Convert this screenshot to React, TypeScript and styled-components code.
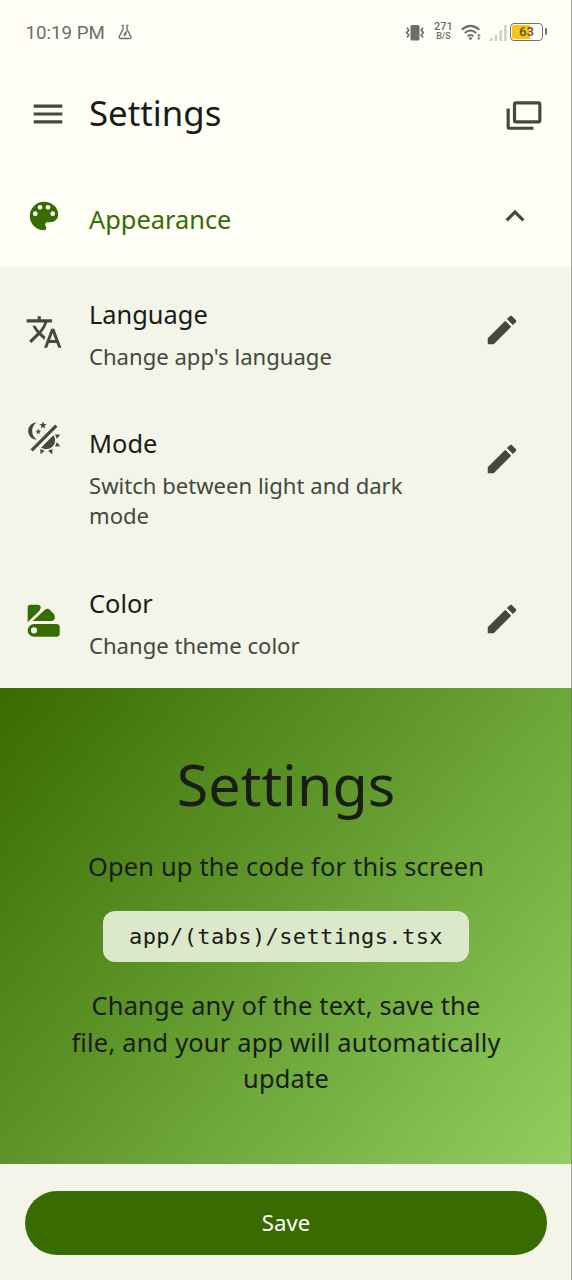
import React from "react";
import styled, { createGlobalStyle } from "styled-components";

const ink = "#1a1c16";
const muted = "#44483d";
const green = "#386b01";

const Global = createGlobalStyle`
  * { box-sizing: border-box; }
  body { margin: 0; background: #f3f5e9; font-family: "Noto Sans", sans-serif; color: ${ink}; }
  h1, h2, h3, p { margin: 0; font-weight: 400; }
`;

const Screen = styled.div`
  position: relative;
  width: 572px;
  height: 1280px;
  display: flex;
  flex-direction: column;
  overflow: hidden;
  background: #f3f5e9;
  &::after {
    content: "";
    position: absolute;
    inset: 0 0 0 auto;
    width: 1px;
    background: rgba(90, 95, 85, 0.5);
  }
`;
const StatusBar = styled.div`
  height: 64px;
  flex: none;
  display: flex;
  align-items: center;
  justify-content: space-between;
  padding: 0 29px 0 25.5px;
  background: #fefef6;
  color: #6c6d69;
  font-family: Roboto, sans-serif;
`;
const StatusGroup = styled.div<{ $gap: number }>`
  display: flex;
  align-items: center;
  gap: ${(p) => p.$gap}px;
`;
const Clock = styled.span`
  padding-top: 2px;
  font-size: 18.7px;
  line-height: 24px;
`;
const Speed = styled.div`
  display: flex;
  flex-direction: column;
  align-items: center;
  width: 20px;
  margin: -2px 0 0 1px;
  font-size: 11px;
  font-weight: 500;
  line-height: 10px;
  small { font-size: 9px; line-height: 9px; }
`;
const Battery = styled.div`
  position: relative;
  width: 33px;
  height: 18px;
  margin-left: -4px;
  border: 1.5px solid #70716c;
  border-radius: 4px;
  padding: 1px;
  background: linear-gradient(90deg, #fbc414 63%, transparent 63%) content-box;
  color: #55513f;
  font-size: 13px;
  font-weight: 500;
  line-height: 14px;
  text-align: center;
  &::after {
    content: "";
    position: absolute;
    right: -4.5px;
    top: 4px;
    width: 2px;
    height: 7px;
    border-radius: 1px;
    background: #70716c;
  }
`;
const AppBar = styled.header`
  height: 102px;
  flex: none;
  display: flex;
  align-items: center;
  padding: 0 29px 2px 28.5px;
  background: #fefef6;
  color: ${muted};
`;
const Title = styled.h1`
  flex: 1;
  margin-left: 22.5px;
  padding-bottom: 2px;
  font-size: 34.8px;
  line-height: 44px;
  color: ${ink};
`;
const SectionHead = styled.div`
  height: 101px;
  flex: none;
  display: flex;
  align-items: center;
  padding: 0 38.5px 2px 25px;
  background: #fefef6;
  color: ${green};
`;
const SectionTitle = styled.h2`
  flex: 1;
  margin-left: 26px;
  padding-top: 7px;
  font-size: 25.4px;
  line-height: 38px;
`;
const Chevron = styled.div`
  color: ${muted};
`;
const Item = styled.div<{ $height: number }>`
  height: ${(p) => p.$height}px;
  flex: none;
  display: flex;
  align-items: flex-start;
  padding: 28px 51.5px 0 25px;
`;
const Lead = styled.div<{ $top: number; $green?: boolean }>`
  width: 38px;
  height: 38px;
  display: flex;
  justify-content: center;
  margin-top: ${(p) => p.$top}px;
  color: ${(p) => (p.$green ? green : muted)};
`;
const Trail = styled.div`
  margin-top: 16px;
  color: ${muted};
`;
const ItemText = styled.div`
  flex: 1;
  margin-left: 26px;
  padding-right: 40px;
`;
const ItemTitle = styled.h3`
  font-size: 25.4px;
  line-height: 38px;
`;
const ItemNote = styled.p`
  margin-top: 8px;
  font-size: 22.1px;
  line-height: 30px;
  color: ${muted};
`;
const Hero = styled.section`
  height: 476px;
  flex: none;
  display: flex;
  flex-direction: column;
  align-items: center;
  padding-top: 60px;
  background: linear-gradient(129.8deg, #386b01, #92cf60);
  text-align: center;
`;
const HeroTitle = styled.h2`
  font-size: 57.4px;
  line-height: 72px;
`;
const HeroText = styled.p<{ $top: number }>`
  width: 434px;
  margin-top: ${(p) => p.$top}px;
  font-size: 25.4px;
  line-height: 36.5px;
  letter-spacing: 0.2px;
`;
const Code = styled.code`
  width: 366px;
  height: 51px;
  margin-top: 27px;
  border-radius: 12px;
  background: #dbe8ca;
  font-family: "DejaVu Sans Mono", monospace;
  font-size: 22px;
  letter-spacing: 0.4px;
  line-height: 51px;
`;
const Footer = styled.footer`
  flex: 1;
  padding: 27px 25px 0;
`;
const SaveButton = styled.button`
  width: 522px;
  height: 64px;
  border: 0;
  border-radius: 32px;
  background: ${green};
  color: #fff;
  font: 400 22.2px/32px "Noto Sans", sans-serif;
`;

const Glyph = ({ d }: { d: string }) => (
  <svg width="38" height="38" viewBox="0 0 24 24" fill="currentColor" display="block">
    <path d={d} />
  </svg>
);

const paths = {
  menu: "M3 6h18v2H3zM3 11h18v2H3zM3 16h18v2H3z",
  chevron: "M7.41 15.41 12 10.83l4.59 4.58L18 14l-6-6-6 6z",
  palette:
    "M17.5 12a1.5 1.5 0 0 1-1.5-1.5A1.5 1.5 0 0 1 17.5 9a1.5 1.5 0 0 1 1.5 1.5a1.5 1.5 0 0 1-1.5 1.5m-3-4A1.5 1.5 0 0 1 13 6.5A1.5 1.5 0 0 1 14.5 5A1.5 1.5 0 0 1 16 6.5A1.5 1.5 0 0 1 14.5 8m-5 0A1.5 1.5 0 0 1 8 6.5A1.5 1.5 0 0 1 9.5 5A1.5 1.5 0 0 1 11 6.5A1.5 1.5 0 0 1 9.5 8m-3 4A1.5 1.5 0 0 1 5 10.5A1.5 1.5 0 0 1 6.5 9A1.5 1.5 0 0 1 8 10.5A1.5 1.5 0 0 1 6.5 12M12 3a9 9 0 0 0-9 9a9 9 0 0 0 9 9a1.5 1.5 0 0 0 1.5-1.5c0-.39-.15-.74-.39-1c-.23-.27-.38-.62-.38-1a1.5 1.5 0 0 1 1.5-1.5H16a5 5 0 0 0 5-5c0-4.42-4.03-8-9-8",
  translate:
    "M12.87 15.07l-2.54-2.51.03-.03A17.52 17.52 0 0 0 14.07 6H17V4h-7V2H8v2H1v2h11.17C11.5 7.92 10.44 9.75 9 11.35 8.07 10.32 7.3 9.19 6.69 8h-2c.73 1.63 1.73 3.17 2.98 4.56l-5.09 5.02L4 19l5-5 3.11 3.11.76-2.04M18.5 10h-2L12 22h2l1.12-3h4.75L21 22h2l-4.5-12m-2.62 7l1.62-4.33L19.12 17h-3.24z",
  theme:
    "M7.5 2c-1.79 1.15-3 3.18-3 5.5s1.21 4.35 3.03 5.5C4.46 13 2 10.54 2 7.5A5.5 5.5 0 0 1 7.5 2m11.57 1.5l1.43 1.43L4.93 20.5L3.5 19.07L19.07 3.5m-6.18 2.43L11.41 5L9.97 6l.42-1.7L9 3.24l1.75-.12l.58-1.65L12 3.1l1.73.03l-1.35 1.13l.51 1.67m-3.3 3.61l-1.16-.73l-1.12.78l.34-1.32l-1.09-.83l1.36-.09l.45-1.29l.51 1.27l1.36.03l-1.05.87l.4 1.31M19 13.5a5.5 5.5 0 0 1-5.5 5.5c-1.22 0-2.35-.4-3.26-1.07l7.69-7.69c.67.91 1.07 2.04 1.07 3.26m-4.4 6.58l2.77-1.15l-.24 3.35l-2.53-2.2m4.33-2.7l1.15-2.77l2.2 2.54l-3.35.23m1.15-4.96l-1.14-2.78l3.34.24l-2.2 2.54M9.63 18.93l2.77 1.15l-2.53 2.19l-.24-3.34z",
  pencil:
    "M20.71 7.04c.39-.39.39-1.04 0-1.41l-2.34-2.34c-.37-.39-1.02-.39-1.41 0l-1.84 1.83 3.75 3.75M3 17.25V21h3.75L17.81 9.93l-3.75-3.75L3 17.25z",
};

const CardsIcon = () => (
  <svg width="38" height="38" viewBox="0 -1 24 24" fill="none" stroke="currentColor" strokeWidth="2">
    <rect x="6" y="4" width="16" height="12" rx="1" />
    <path d="M2 7.5V19a1 1 0 0 0 1 1h15" />
  </svg>
);

const SwatchIcon = () => (
  <svg width="33.4" height="33.4" viewBox="0 0 100 100" fill="currentColor">
    <path d="M2 55V10q0-8 8-8h22q9 0 9 8 0 6-4 10z" />
    <path d="M17 51 54 17q8-6 14 0l12 12q6 8 3 15-3 7-10 7z" />
    <path
      fillRule="evenodd"
      d="M21 60h67q10 0 10 9v20q0 9-10 9H21a19 19 0 0 1 0-38zm0 10a9 9 0 1 0 0 18 9 9 0 0 0 0-18z"
    />
  </svg>
);

const FlaskIcon = () => (
  <svg width="14" height="16" viewBox="0 0 14 16" fill="none" stroke="currentColor" strokeWidth="1.3">
    <path d="M3.5 1.4H5v4l-3.800 7.200q-.7 1.900 1.200 1.900h9.200q1.900 0 1.200-1.900L9 5.400v-4h1.500M6 10.500l2-2.500v2M8 9.500l-2 2.500" />
  </svg>
);

const VibrateIcon = () => (
  <svg width="20" height="17" viewBox="0 0 20 17" fill="none" stroke="currentColor" strokeWidth="1.6">
    <rect x="5.5" y="1" width="9" height="15.5" rx="1.5" fill="currentColor" stroke="none" />
    <path d="M2 3.800l1.800 2.400-2.200 2.400 2.200 2.400L2 13.400M18 3.800l-1.800 2.400 2.200 2.400-2.200 2.400 1.800 2.400" />
  </svg>
);

const WifiIcon = () => (
  <svg width="21" height="17" viewBox="0 0 21 17" fill="none" stroke="currentColor" strokeWidth="2">
    <path d="M.7 5.800Q9.500-2 18.300 5.800M3.800 9q5.700-5 11.400 0M6.600 12.200q2.900-2.500 5.800 0" />
    <path d="m7.300 13.900 2.200 2.400 2.200-2.400q-2.200-1.200-4.400 0zM16 12.200l1.800-2.400 1.800 2.400zM16 13.500l1.800 2.400 1.800-2.400z" fill="currentColor" stroke="none" />
  </svg>
);

const SignalIcon = () => (
  <svg width="17" height="17" viewBox="0 0 17 17" fill="#d0d0c9">
    <path d="M0 14h2.500v3H0zM4.700 11h2.500v6H4.700zM9.400 6h2.500v11H9.400zM14.100 1h2.500v16h-2.500z" />
  </svg>
);

type RowProps = {
  icon: React.ReactNode;
  iconTop: number;
  title: string;
  note: string;
  height: number;
  green?: boolean;
};

const SettingRow = ({ icon, iconTop, title, note, height, green: isGreen }: RowProps) => (
  <Item $height={height}>
    <Lead $top={iconTop} $green={isGreen}>{icon}</Lead>
    <ItemText>
      <ItemTitle>{title}</ItemTitle>
      <ItemNote>{note}</ItemNote>
    </ItemText>
    <Trail><Glyph d={paths.pencil} /></Trail>
  </Item>
);

export default function App() {
  return (
    <Screen>
      <Global />
      <StatusBar>
        <StatusGroup $gap={13}>
          <Clock>10:19 PM</Clock>
          <FlaskIcon />
        </StatusGroup>
        <StatusGroup $gap={7.5}>
          <VibrateIcon />
          <Speed>271<small>B/S</small></Speed>
          <WifiIcon />
          <SignalIcon />
          <Battery>63</Battery>
        </StatusGroup>
      </StatusBar>
      <AppBar>
        <Glyph d={paths.menu} />
        <Title>Settings</Title>
        <CardsIcon />
      </AppBar>
      <SectionHead>
        <Glyph d={paths.palette} />
        <SectionTitle>Appearance</SectionTitle>
        <Chevron><Glyph d={paths.chevron} /></Chevron>
      </SectionHead>
      <SettingRow icon={<Glyph d={paths.translate} />} iconTop={18} title="Language" note="Change app's language" height={129} />
      <SettingRow icon={<Glyph d={paths.theme} />} iconTop={-5.5} title="Mode" note="Switch between light and dark mode" height={160} />
      <SettingRow icon={<SwatchIcon />} iconTop={20} title="Color" note="Change theme color" height={131.5} green />
      <Hero>
        <HeroTitle>Settings</HeroTitle>
        <HeroText $top={28}>Open up the code for this screen</HeroText>
        <Code>app/(tabs)/settings.tsx</Code>
        <HeroText $top={25}>Change any of the text, save the file, and your app will automatically update</HeroText>
      </Hero>
      <Footer>
        <SaveButton>Save</SaveButton>
      </Footer>
    </Screen>
  );
}
